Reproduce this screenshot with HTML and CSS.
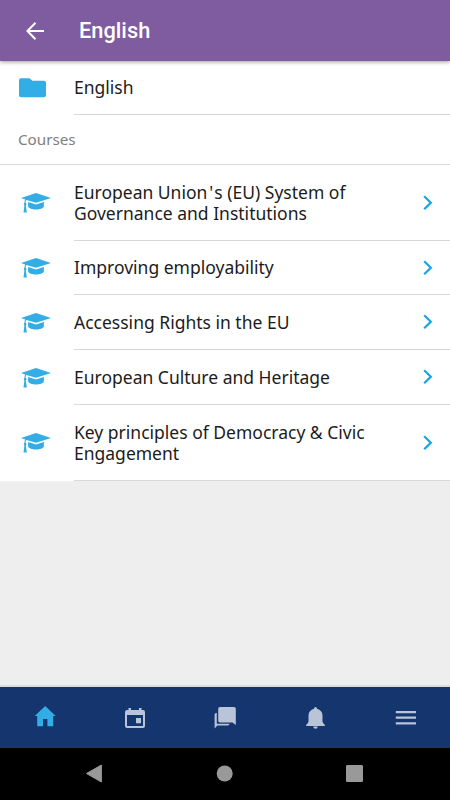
FILE: index.html
```
<!DOCTYPE html>
<html lang="en">
<head>
  <meta charset="UTF-8">
  <meta name="viewport" content="width=device-width, initial-scale=1">
  <title>English</title>
  <link rel="stylesheet" href="styles.css">
</head>
<body>

  <!-- shared icons -->
  <svg class="defs" width="0" height="0">
    <symbol id="cap" viewBox="0 0 30 20">
      <path d="M15 0 L30 5 L15 9.8 L5.4 6.9 C4.8 7.5 4.6 8.5 4.6 9.8 C5.6 10.4 5.7 11.6 4.9 12.4 L5.8 19.5 H2.5 L3.4 12.4 C2.6 11.6 2.6 10.4 3.5 9.8 C3.5 8.3 3.7 7.2 4.2 6.4 L0 5 Z"/>
      <path d="M7.1 9 L15 11.6 L22.9 9 V13.4 C22.2 15.4 18.7 16.4 15 16.4 C11.3 16.4 7.8 15.4 7.1 13.4 Z"/>
    </symbol>
    <symbol id="chevron" viewBox="0 0 10 16">
      <path d="M1.2 1.2 L7.8 7.7 L1.2 14.2" fill="none" stroke="#15a5e5" stroke-width="2.2"/>
    </symbol>
  </svg>

  <header class="toolbar">
    <svg class="back" width="18" height="18" viewBox="0 0 18 18">
      <path d="M18 9 H1.5 M9.5 0.8 L1.4 9 L9.5 17.2" fill="none" stroke="#fff" stroke-width="2"/>
    </svg>
    <h1>English</h1>
  </header>

  <main class="content">
    <div class="item category">
      <svg class="folder" width="27" height="20" viewBox="0 0 27 20">
        <path d="M2 0.3 H10.5 L13.5 2.8 H25 Q27 2.8 27 4.8 V17.3 Q27 19.3 25 19.3 H2 Q0 19.3 0 17.3 V2.3 Q0 0.3 2 0.3 Z"/>
      </svg>
      <div class="inner"><span>English</span></div>
    </div>

    <h2 class="divider">Courses</h2>

    <div class="item tall">
      <svg class="cap" width="30" height="20"><use href="#cap"/></svg>
      <div class="inner">
        <span>European Union<span class="apos">'</span>s (EU) System of<br>Governance and Institutions</span>
        <svg class="chevron" width="10" height="16"><use href="#chevron"/></svg>
      </div>
    </div>
    <div class="item short">
      <svg class="cap" width="30" height="20"><use href="#cap"/></svg>
      <div class="inner">
        <span>Improving employability</span>
        <svg class="chevron" width="10" height="16"><use href="#chevron"/></svg>
      </div>
    </div>
    <div class="item">
      <svg class="cap" width="30" height="20"><use href="#cap"/></svg>
      <div class="inner">
        <span>Accessing Rights in the EU</span>
        <svg class="chevron" width="10" height="16"><use href="#chevron"/></svg>
      </div>
    </div>
    <div class="item">
      <svg class="cap" width="30" height="20"><use href="#cap"/></svg>
      <div class="inner">
        <span>European Culture and Heritage</span>
        <svg class="chevron" width="10" height="16"><use href="#chevron"/></svg>
      </div>
    </div>
    <div class="item tall">
      <svg class="cap" width="30" height="20"><use href="#cap"/></svg>
      <div class="inner">
        <span>Key principles of Democracy &amp; Civic<br>Engagement</span>
        <svg class="chevron" width="10" height="16"><use href="#chevron"/></svg>
      </div>
    </div>
  </main>

  <nav class="tabs">
    <a class="tab active">
      <svg width="22" height="24" viewBox="0 0 22 24">
        <path d="M11.2 0 L21.7 10 H19.2 V20.2 H13.4 V13.1 H9 V20.2 H3.2 V10 H0.7 Z"/>
      </svg>
    </a>
    <a class="tab">
      <svg width="22" height="24" viewBox="0 0 22 24">
        <path fill-rule="evenodd" d="M4.5 2 H7 V4 H15 V2 H17.5 V4 H19 Q21 4 21 6 V20 Q21 22 19 22 H3 Q1 22 1 20 V6 Q1 4 3 4 H4.5 Z M3 9 V20 H19 V9 Z M12 12 H17 V17.3 H12 Z"/>
      </svg>
    </a>
    <a class="tab">
      <svg width="22" height="24" viewBox="0 0 22 24">
        <path d="M6 1 H20 Q21.8 1 21.8 2.8 V19 L18.5 16.5 H6 Q4.2 16.5 4.2 14.7 V2.8 Q4.2 1 6 1 Z"/>
        <path d="M0.6 22.5 V8.5 Q0.6 7 2.2 7 H2.8 V17.8 H15.6 Q15 19.5 13.7 19.5 H3.4 Z"/>
      </svg>
    </a>
    <a class="tab">
      <svg width="22" height="24" viewBox="0 0 22 24">
        <path d="M11.5 1 Q12.9 1 13 2.7 Q18.3 4.1 18.5 9.5 V15.5 Q18.7 17.5 20.8 18.8 V20 H2.2 V18.8 Q4.3 17.5 4.5 15.5 V9.5 Q4.7 4.1 10 2.7 Q10.1 1 11.5 1 Z M9.2 20.5 H13.8 Q13.5 22.7 11.5 22.7 Q9.5 22.7 9.2 20.5 Z"/>
      </svg>
    </a>
    <a class="tab">
      <svg width="22" height="24" viewBox="0 0 22 24">
        <path d="M1.8 5 H22 V7.2 H1.8 Z M1.8 10.6 H22 V12.8 H1.8 Z M1.8 16.2 H22 V18.4 H1.8 Z"/>
      </svg>
    </a>
  </nav>

  <footer class="system-bar">
    <svg width="17" height="19" viewBox="0 0 17 19"><path d="M15.4 1 V18 L0.5 9.5 Z" stroke="#999" stroke-linejoin="round"/></svg>
    <svg width="17" height="17" viewBox="0 0 17 17"><circle cx="8.7" cy="8.5" r="8"/></svg>
    <svg width="17" height="17" viewBox="0 0 17 17"><rect width="17" height="17" rx="1.2"/></svg>
  </footer>

</body>
</html>
```
FILE: styles.css
```
* {
  box-sizing: border-box;
}

body {
  margin: 0;
  height: 800px;
  display: flex;
  flex-direction: column;
  overflow: hidden;
  background-color: #eee;
  color: #1c1c1c;
  font-family: "Noto Sans", sans-serif;
}

svg {
  display: block;
  flex: none;
}

.defs {
  position: absolute;
}

.toolbar {
  flex: none;
  height: 61px;
  display: flex;
  align-items: center;
  padding-left: 26px;
  background-color: #7e5c9f;
  color: #fff;
  box-shadow: 0 1px 4px rgba(0, 0, 0, 0.4);
  z-index: 1;
}

.toolbar h1 {
  margin: 0 0 0 35px;
  font-family: Roboto, sans-serif;
  font-size: 21.8px;
  font-weight: 500;
}

.content {
  flex: 1;
}

.item {
  height: 55px;
  display: flex;
  align-items: stretch;
  background-color: #fff;
  font-size: 17.5px;
  line-height: 21px;
}

.category,
.short {
  height: 54px;
}

.tall {
  height: 76px;
}

.inner {
  flex: 1;
  display: flex;
  align-items: center;
  justify-content: space-between;
  padding-right: 17px;
  border-bottom: 1px solid #d8d8d8;
}

.apos {
  margin: 0 1px 0 2px;
}

.folder {
  align-self: center;
  margin: 0 28px 0 19px;
  fill: #32ade5;
}

.cap {
  align-self: center;
  margin: 0 23px 0 21px;
  fill: #32ade5;
}

.divider {
  height: 50px;
  margin: 0;
  padding-left: 18px;
  border-bottom: 1px solid #dadada;
  background-color: #fff;
  color: #808080;
  font-size: 15.2px;
  font-weight: 400;
  line-height: 49px;
}

.tabs {
  flex: none;
  height: 63px;
  display: flex;
  align-items: center;
  border-top: 2px solid #ddd;
  background-color: #15356f;
}

.tab {
  flex: 1;
  display: flex;
  justify-content: center;
  fill: #b9c4d9;
}

.tab.active {
  fill: #32ade5;
}

.tab svg {
  overflow: visible;
}

.system-bar {
  flex: none;
  height: 52px;
  display: flex;
  align-items: center;
  justify-content: space-between;
  padding: 0 87px 1px 86px;
  background-color: #000;
  fill: #999;
}
```
